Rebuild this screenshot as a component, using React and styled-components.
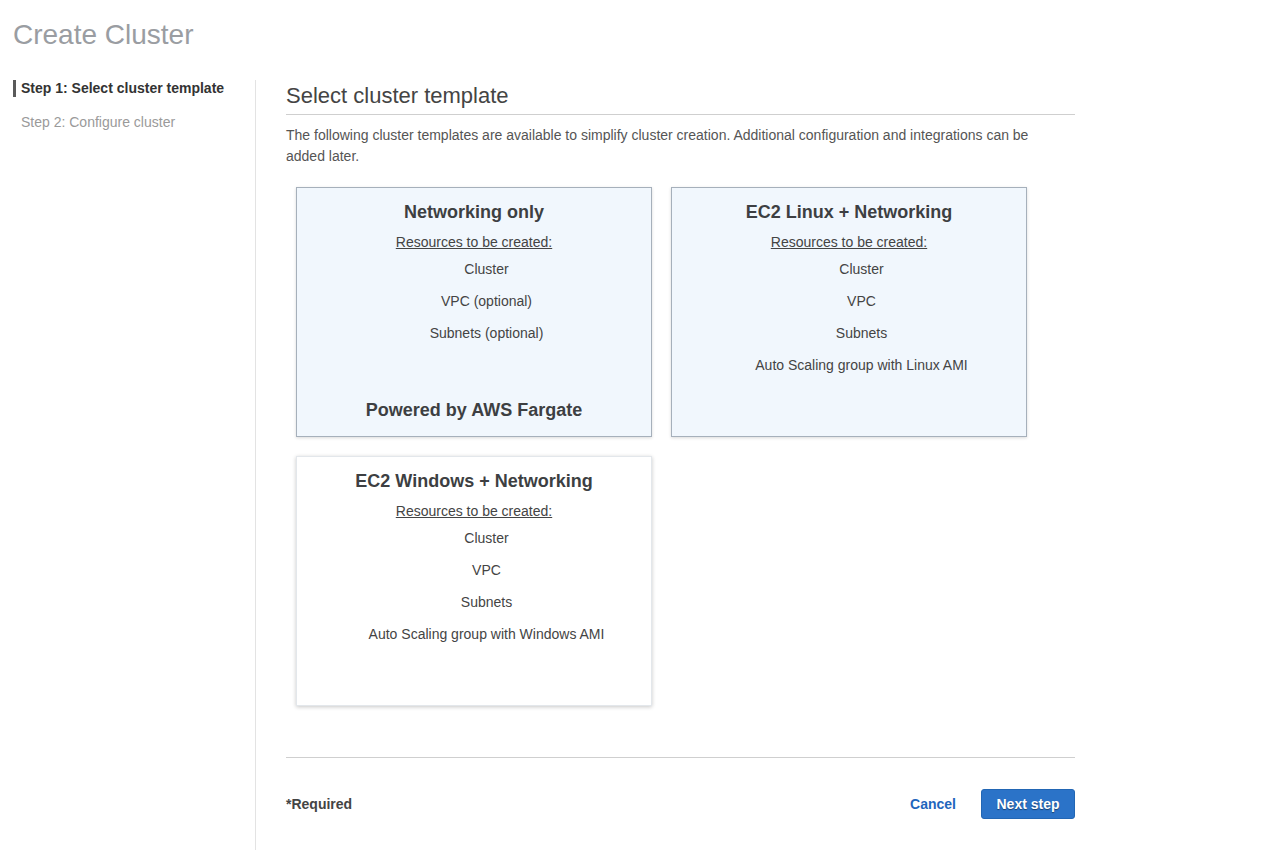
import React from 'react';
import styled, { createGlobalStyle } from 'styled-components';

const GlobalStyle = createGlobalStyle`
  body {
    margin: 0;
    background: #fff;
    font-family: "Liberation Sans", Arial, sans-serif;
    color: #444;
  }
`;

const Page = styled.div`
  padding: 20px 0 0 13px;
  width: 1268px;
  box-sizing: border-box;
`;

const PageTitle = styled.h1`
  margin: 0;
  font-size: 28px;
  line-height: 30px;
  font-weight: 400;
  color: #9a9da2;
`;

const Layout = styled.div`
  display: flex;
  margin-top: 30px;
  margin-left: -13px;
`;

const Sidebar = styled.nav`
  width: 256px;
  min-height: 770px;
  border-right: 1px solid #e3e3e3;
  padding-left: 13px;
  box-sizing: border-box;
`;

const StepItem = styled.div`
  font-size: 14px;
  line-height: 17px;
  padding-left: 5px;
  border-left: 3px solid ${p => (p.active ? '#5a5a5a' : 'transparent')};
  color: ${p => (p.active ? '#333' : '#9a9a9a')};
  font-weight: ${p => (p.active ? 700 : 400)};
  margin-bottom: 17px;
`;

const Main = styled.main`
  width: 789px;
  margin-left: 30px;
`;

const SectionTitle = styled.h2`
  margin: 4px 0 0;
  font-size: 22px;
  line-height: 24px;
  font-weight: 400;
  color: #444;
  padding-bottom: 6px;
  border-bottom: 1px solid #cfcfcf;
`;

const Description = styled.p`
  margin: 10px 0 0;
  max-width: 770px;
  font-size: 14px;
  line-height: 21px;
  color: #555;
`;

const CardGrid = styled.div`
  display: grid;
  grid-template-columns: 356px 356px;
  column-gap: 19px;
  row-gap: 19px;
  margin-top: 20px;
  padding-left: 10px;
`;

const Card = styled.div`
  height: 250px;
  box-sizing: border-box;
  display: flex;
  flex-direction: column;
  align-items: center;
  padding: 14px 10px 16px;
  background: ${p => (p.selected ? '#f1f7fd' : '#fff')};
  border: 1px solid ${p => (p.selected ? '#a6b0bb' : '#e3e7eb')};
  box-shadow: ${p =>
    p.selected ? '0 1px 3px rgba(0,0,0,0.15)' : '0 1px 4px rgba(0,0,0,0.22)'};
  cursor: pointer;
`;

const CardTitle = styled.div`
  font-size: 18px;
  line-height: 20px;
  font-weight: 700;
  color: #3d3f42;
`;

const ResourcesLabel = styled.div`
  margin-top: 11px;
  font-size: 14px;
  line-height: 18px;
  text-decoration: underline;
  color: #444;
`;

const ResourceList = styled.ul`
  list-style: none;
  margin: 9px 0 0;
  padding: 0 0 0 25px;
  text-align: center;
`;

const Resource = styled.li`
  font-size: 14px;
  line-height: 18px;
  color: #444;
  margin-bottom: 14px;
`;

const PoweredBy = styled(CardTitle)`
  margin-top: auto;
`;

const Footer = styled.div`
  margin-top: 51px;
  border-top: 1px solid #cfcfcf;
  padding-top: 31px;
  display: flex;
  align-items: center;
`;

const Required = styled.div`
  font-size: 14px;
  font-weight: 700;
  color: #444;
  flex: 1;
`;

const CancelLink = styled.a`
  font-size: 14px;
  font-weight: 700;
  color: #1f66bd;
  margin-right: 25px;
  cursor: pointer;
`;

const PrimaryButton = styled.button`
  width: 94px;
  height: 30px;
  border: 1px solid #2266b4;
  border-radius: 3px;
  background: #2b73c8;
  color: #fff;
  font-family: inherit;
  font-size: 14px;
  font-weight: 700;
  text-shadow: 0 1px 1px rgba(0, 0, 0, 0.45);
  cursor: pointer;
`;

const templates = [
  {
    title: 'Networking only',
    items: ['Cluster', 'VPC (optional)', 'Subnets (optional)'],
    footer: 'Powered by AWS Fargate',
    selected: true,
  },
  {
    title: 'EC2 Linux + Networking',
    items: ['Cluster', 'VPC', 'Subnets', 'Auto Scaling group with Linux AMI'],
    selected: true,
  },
  {
    title: 'EC2 Windows + Networking',
    items: ['Cluster', 'VPC', 'Subnets', 'Auto Scaling group with Windows AMI'],
  },
];

export default function App() {
  return (
    <>
      <GlobalStyle />
      <Page>
        <PageTitle>Create Cluster</PageTitle>
        <Layout>
          <Sidebar>
            <StepItem active>Step 1: Select cluster template</StepItem>
            <StepItem>Step 2: Configure cluster</StepItem>
          </Sidebar>
          <Main>
            <SectionTitle>Select cluster template</SectionTitle>
            <Description>
              The following cluster templates are available to simplify cluster creation. Additional
              configuration and integrations can be added later.
            </Description>
            <CardGrid>
              {templates.map(t => (
                <Card key={t.title} selected={t.selected}>
                  <CardTitle>{t.title}</CardTitle>
                  <ResourcesLabel>Resources to be created:</ResourcesLabel>
                  <ResourceList>
                    {t.items.map(item => (
                      <Resource key={item}>{item}</Resource>
                    ))}
                  </ResourceList>
                  {t.footer && <PoweredBy>{t.footer}</PoweredBy>}
                </Card>
              ))}
            </CardGrid>
            <Footer>
              <Required>*Required</Required>
              <CancelLink>Cancel</CancelLink>
              <PrimaryButton>Next step</PrimaryButton>
            </Footer>
          </Main>
        </Layout>
      </Page>
    </>
  );
}
